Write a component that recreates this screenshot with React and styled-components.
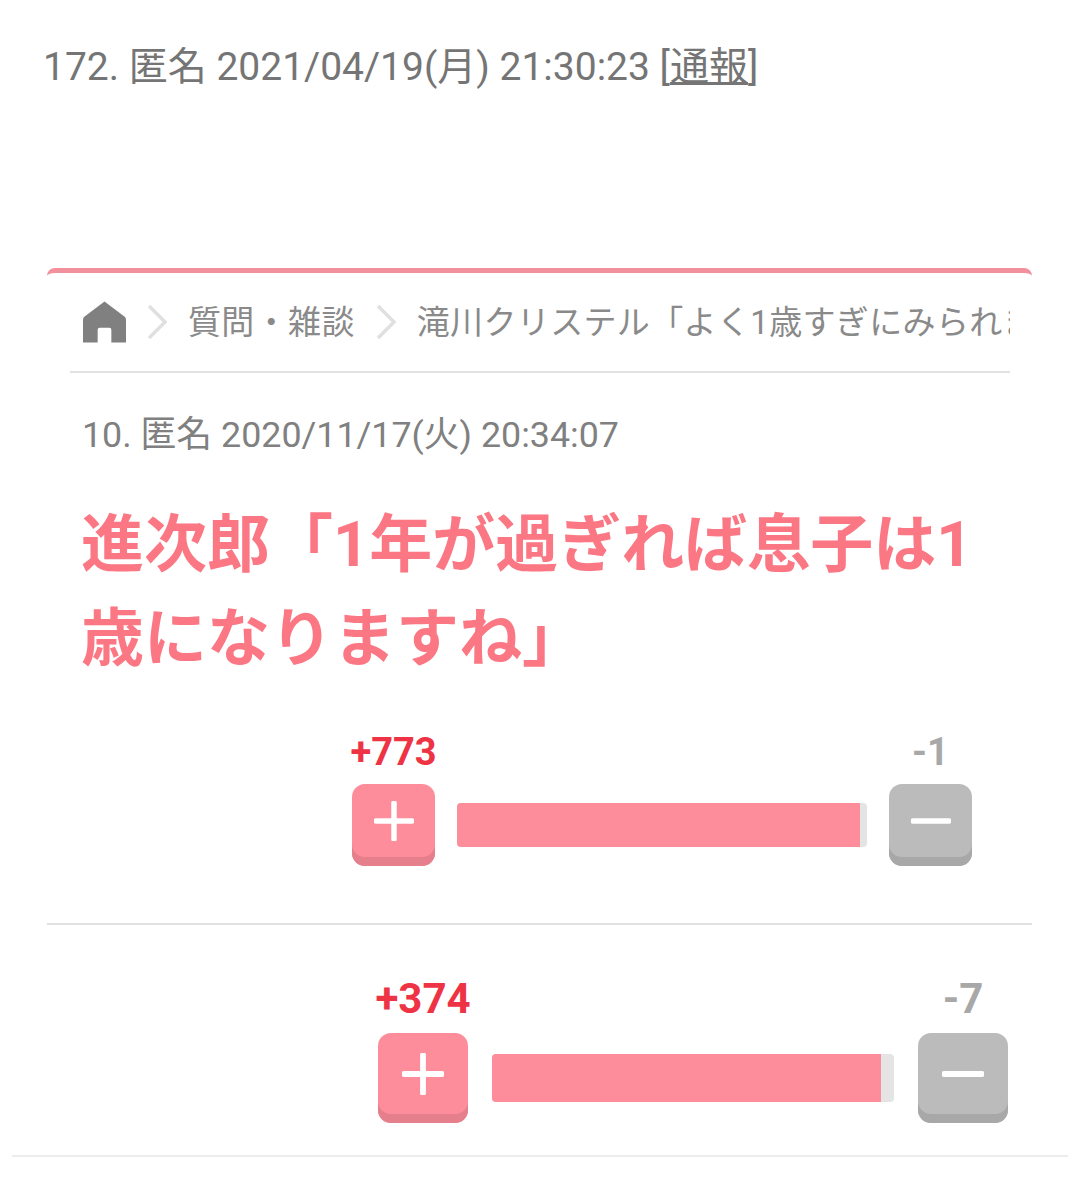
import React from "react";
import styled, { createGlobalStyle } from "styled-components";

const GlobalStyle = createGlobalStyle`
  html, body { margin: 0; padding: 0; background: #fff; }
  body { font-family: Roboto, "Noto Sans CJK JP", sans-serif; }
`;

const Page = styled.div`
  width: 1080px;
  height: 1179px;
  overflow: hidden;
  background: #fff;
`;

const PostHeader = styled.div`
  padding: 44px 0 0 43px;
  height: 268px;
  box-sizing: border-box;
  font-size: 39px;
  line-height: 46px;
  color: #757575;
  white-space: nowrap;
`;

const ReportLink = styled.span`
  text-decoration: underline;
`;

const Card = styled.section`
  margin: 0 48px 0 47px;
  border-top: 5px solid #f2919d;
  border-radius: 8px 8px 0 0;
  border-bottom: 2px solid #e0e0e0;
  height: 650px;
`;

const Breadcrumb = styled.nav`
  margin: 0 22px 0 23px;
  height: 100px;
  padding-left: 13px;
  box-sizing: border-box;
  display: flex;
  align-items: center;
  border-bottom: 2px solid #e2e2e2;
  overflow: hidden;
  white-space: nowrap;
  font-size: 33px;
  color: #8a8a8a;
`;

const Crumb = styled.span`
  flex: none;
  padding-bottom: 4px;
  letter-spacing: 0.35px;
`;

const Chevron = styled.svg`
  flex: none;
  width: 20px;
  height: 36px;
  margin: 0 21px;
`;

const Meta = styled.div`
  margin: 39px 0 0 35px;
  font-size: 35.8px;
  line-height: 46px;
  color: #808080;
  white-space: nowrap;
`;

const Headline = styled.h1`
  margin: 40px 40px 0 34px;
  font-size: 63px;
  line-height: 94px;
  font-weight: 700;
  color: #fa7783;
`;

const VoteBlock = styled.div`
  display: grid;
  grid-template-columns: ${(p) => `${p.$btn}px ${p.$barWidth}px ${p.$btn}px`};
  column-gap: ${(p) => p.$gap}px;
  row-gap: 9px;
  justify-content: start;
  margin-left: ${(p) => p.$left}px;
  margin-top: ${(p) => p.$top}px;
  align-items: center;
`;

const Count = styled.div`
  justify-self: center;
  font-family: Roboto, sans-serif;
  font-weight: 700;
  font-size: ${(p) => p.$size}px;
  line-height: ${(p) => p.$line}px;
  color: ${(p) => (p.$up ? "#ee3345" : "#a8a8a8")};
  grid-column: ${(p) => (p.$up ? 1 : 3)};
  grid-row: 1;
  white-space: nowrap;
`;

const VoteButton = styled.div`
  grid-row: 2;
  width: ${(p) => p.$btn}px;
  height: ${(p) => p.$h}px;
  box-sizing: border-box;
  border-radius: 13px;
  padding-bottom: 9px;
  display: flex;
  align-items: center;
  justify-content: center;
  background: ${(p) => (p.$up ? "#fe8d9b" : "#bbbbbb")};
  box-shadow: inset 0 -9px 0 ${(p) => (p.$up ? "#e67f8c" : "#a8a8a8")};
`;

const Track = styled.div`
  grid-row: 2;
  height: ${(p) => p.$h}px;
  border-radius: 4px;
  background: #e4e4e4;
  overflow: hidden;
`;

const Fill = styled.div`
  height: 100%;
  background: #fe8d9b;
`;

const BottomRule = styled.div`
  margin: 32px 12px 0;
  height: 2px;
  background: #ececec;
`;

const VoteIcon = ({ plus, size }) => (
  <svg width={size} height={size} viewBox="0 0 40 40" fill="none" stroke="#fff" strokeWidth="5.5" strokeLinecap="round">
    <path d="M2 20H38" />
    {plus && <path d="M20 2V38" />}
  </svg>
);

const HomeIcon = () => (
  <svg width="43" height="42" viewBox="0 0 44 42" style={{ flex: "none" }}>
    <path fill="#808080" d="M22 0 43 16Q44 17 44 19V42H29V29Q29 27 27 27H17Q15 27 15 29V42H0V19Q0 17 1 16Z" />
  </svg>
);

const CrumbArrow = () => (
  <Chevron viewBox="0 0 20 36" fill="none" stroke="#e0e0e0" strokeWidth="3.5">
    <path d="M2 2 18 18 2 34" />
  </Chevron>
);

const Vote = ({ up, down, percent, btn, h, gap, barWidth, barH, left, top, countSize, countLine, icon }) => (
  <VoteBlock $btn={btn} $barWidth={barWidth} $gap={gap} $left={left} $top={top}>
    <Count $up $size={countSize} $line={countLine}>{up}</Count>
    <Count $size={countSize} $line={countLine}>{down}</Count>
    <VoteButton $up $btn={btn} $h={h}><VoteIcon plus size={icon} /></VoteButton>
    <Track $h={barH}>
      <Fill style={{ width: `${percent}%` }} />
    </Track>
    <VoteButton $btn={btn} $h={h}><VoteIcon size={icon} /></VoteButton>
  </VoteBlock>
);

export default function App() {
  return (
    <Page>
      <GlobalStyle />
      <PostHeader>
        172. 匿名 2021/04/19(月) 21:30:23 [<ReportLink>通報</ReportLink>]
      </PostHeader>
      <Card>
        <Breadcrumb>
          <HomeIcon />
          <CrumbArrow />
          <Crumb>質問・雑談</Crumb>
          <CrumbArrow />
          <Crumb>滝川クリステル「よく1歳すぎにみられます</Crumb>
        </Breadcrumb>
        <Meta>10. 匿名 2020/11/17(火) 20:34:07</Meta>
        <Headline>進次郎「1年が過ぎれば息子は1歳になりますね」</Headline>
        <Vote up="+773" down="-1" percent={98.3} btn={83} h={82} gap={22} barWidth={410} barH={44} left={305} top={43} countSize={38} countLine={46} icon={40} />
      </Card>
      <Vote up="+374" down="-7" percent={96.8} btn={90} h={90} gap={24} barWidth={402} barH={48} left={378} top={49} countSize={42} countLine={50} icon={42} />
      <BottomRule />
    </Page>
  );
}
